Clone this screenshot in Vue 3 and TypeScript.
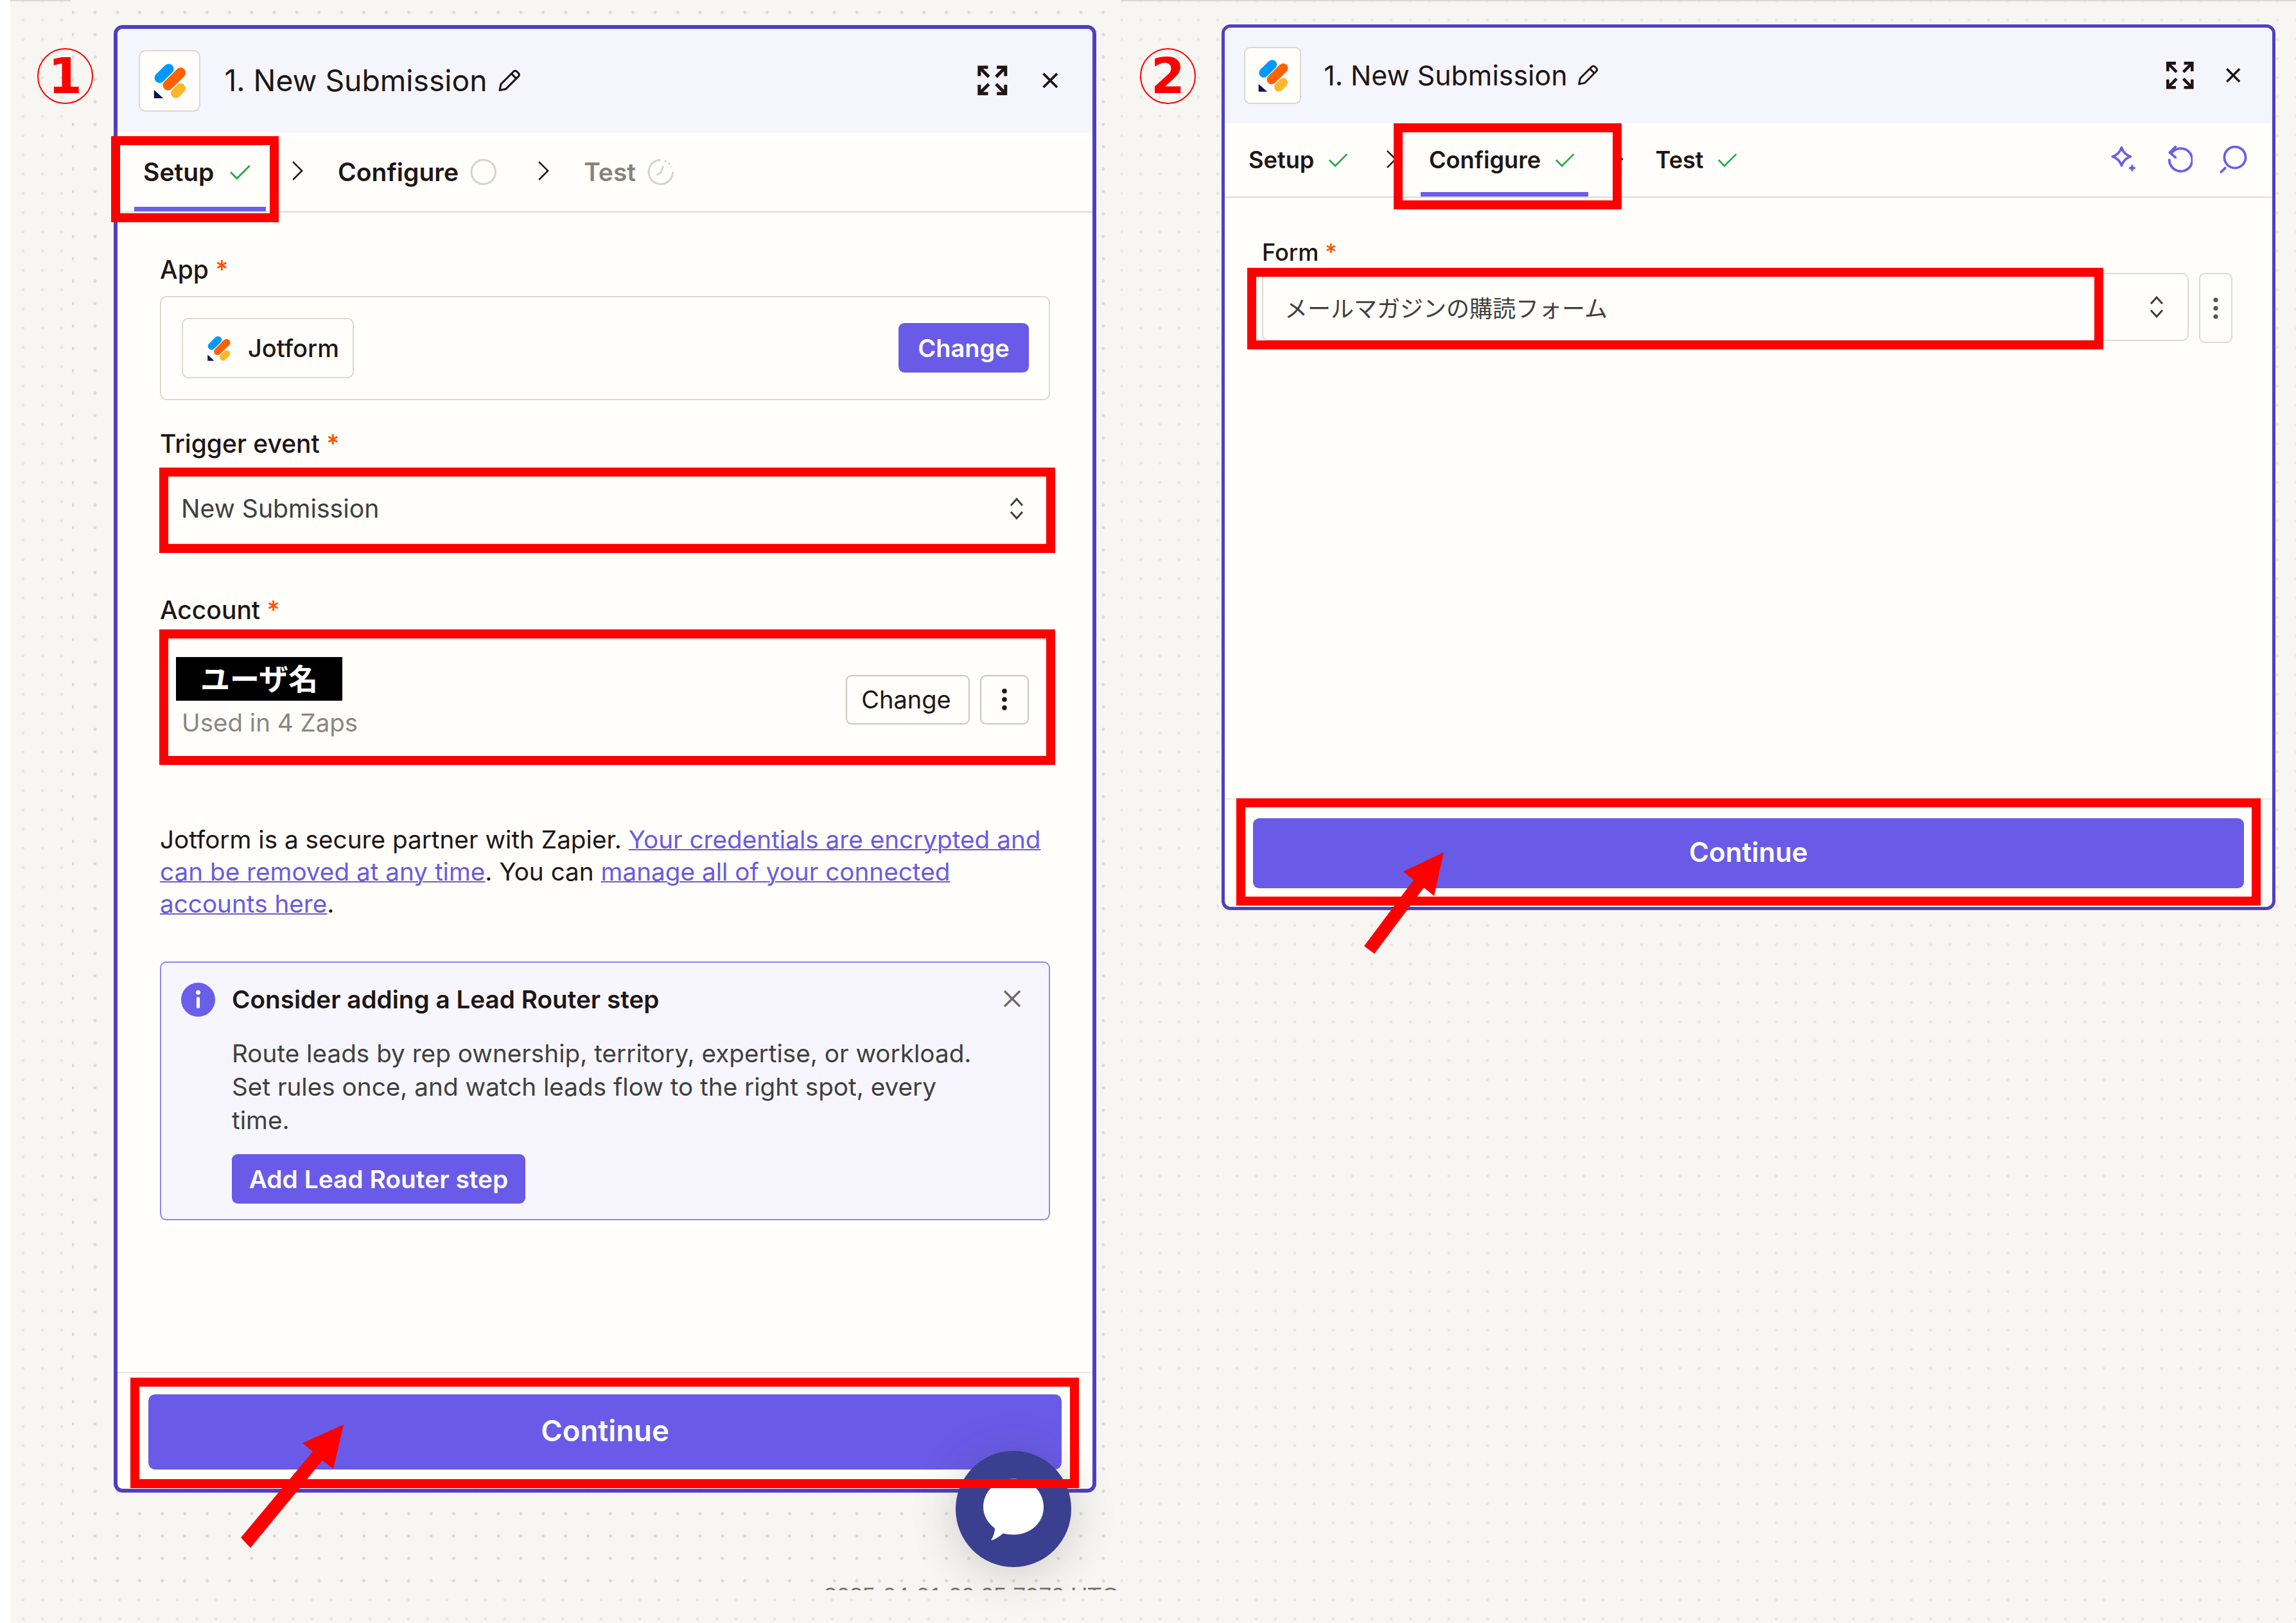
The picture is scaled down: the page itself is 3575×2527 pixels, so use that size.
<template>
  <div class="stage">
    <div class="canvas">
      <div class="grid-left"></div>
      <div class="strip strip-left"></div>
      <div class="strip strip-right"></div>
      <div class="cut-text">2025-04-01 00:05 7970 UTC</div>

      <div class="panels">
        <section v-for="panel in panels" :key="panel.id" class="panel" :class="`panel-${panel.id}`">
          <!-- Header -->
          <header class="panel-header">
            <div class="app-icon">
              <svg class="logo" viewBox="70 60 150 170">
                <path d="M100 133 141 93" stroke="#0099ff" stroke-width="46" stroke-linecap="round" />
                <path d="M138 166 195 110" stroke="#ff6100" stroke-width="46" stroke-linecap="round" />
                <path d="M173 202 195 180" stroke="#ffb629" stroke-width="44" stroke-linecap="round" />
                <path d="M75 187V225H117Z" fill="#0a1551" />
              </svg>
            </div>
            <h2 class="title">1. New Submission</h2>
            <svg class="pencil" viewBox="0 0 24 24" fill="none" stroke="#201515" stroke-width="1.8" stroke-linejoin="round">
              <path d="M3.5 20.5 4.6 15 16 3.6a2 2 0 0 1 2.8 0l1.6 1.6a2 2 0 0 1 0 2.8L9 19.4Z" />
              <path d="M14 5.6 18.4 10" />
            </svg>
            <button class="head-btn expand">
              <svg viewBox="0 0 24 24" fill="none" stroke="#201515" stroke-width="2.2">
                <path d="M3 9V3h6M3 3l6.5 6.5M15 3h6v6M21 3l-6.5 6.5M3 15v6h6M3 21l6.5-6.5M15 21h6v-6M21 21l-6.5-6.5" />
              </svg>
            </button>
            <button class="head-btn close">
              <svg viewBox="0 0 24 24" fill="none" stroke="#201515" stroke-width="3.2">
                <path d="M3 3 21 21M21 3 3 21" />
              </svg>
            </button>
          </header>

          <!-- Tabs -->
          <nav class="tabs">
            <template v-for="(tab, i) in panel.tabs" :key="tab.label">
              <svg v-if="i > 0" class="tab-sep" viewBox="0 0 18 30" fill="none" stroke="#201515" stroke-width="2.6">
                <path d="M2 1 16 15 2 29" />
              </svg>
              <div class="tab" :class="{ active: tab.active, muted: tab.state === 'pending' }">
                <span>{{ tab.label }}</span>
                <svg v-if="tab.state === 'done'" class="tab-check" viewBox="0 0 34 24" fill="none" stroke="#2fa84f" stroke-width="3">
                  <path d="M2 12 12 22 32 2" />
                </svg>
                <svg v-else-if="tab.state === 'todo'" class="tab-state" viewBox="0 0 42 42" fill="none" stroke="#d6d3c9" stroke-width="3">
                  <circle cx="21" cy="21" r="19" />
                </svg>
                <svg v-else class="tab-state" viewBox="0 0 42 42" fill="none" stroke="#d6d3c9" stroke-width="3">
                  <path d="M21 2a19 19 0 1 0 19 19" />
                  <path d="M27 3.5a19 19 0 0 1 11 10" stroke-dasharray="3 4" />
                  <path d="M25 12 21 22l-6 4" />
                </svg>
              </div>
            </template>
            <div v-if="panel.id === 2" class="tools">
              <svg class="tool" viewBox="0 0 36 36" fill="none" stroke="#6a5fe8" stroke-width="3" stroke-linejoin="round">
                <path d="M15 3c2 6 5 9 11 11-6 2-9 5-11 11-2-6-5-9-11-11 6-2 9-5 11-11Z" />
                <path d="M28 24c.7 2.400 1.600 3.300 4 4-2.400.7-3.300 1.600-4 4-.7-2.400-1.600-3.300-4-4 2.400-.7 3.300-1.600 4-4Z" fill="#6a5fe8" stroke-width="1" />
              </svg>
              <svg class="tool" viewBox="0 0 36 36" fill="none" stroke="#6a5fe8" stroke-width="3" stroke-linecap="round">
                <path d="M10 10a14 14 0 1 1-2.500 8" />
                <path d="M15 2 8 9l7 6" stroke-linejoin="round" />
              </svg>
              <svg class="tool" viewBox="0 0 36 36" fill="none" stroke="#6a5fe8" stroke-width="3" stroke-linecap="round">
                <circle cx="21" cy="15" r="13" />
                <path d="M4 33 9 28" />
              </svg>
            </div>
          </nav>

          <!-- Setup step -->
          <div v-if="panel.id === 1" class="body">
            <label class="field-label">App <i>*</i></label>
            <div class="app-box">
              <div class="chip">
                <svg class="chip-logo" viewBox="70 60 150 170">
                  <path d="M100 133 141 93" stroke="#0099ff" stroke-width="46" stroke-linecap="round" />
                  <path d="M138 166 195 110" stroke="#ff6100" stroke-width="46" stroke-linecap="round" />
                  <path d="M173 202 195 180" stroke="#ffb629" stroke-width="44" stroke-linecap="round" />
                  <path d="M75 187V225H117Z" fill="#0a1551" />
                </svg>
                Jotform
              </div>
              <button class="btn-change">Change</button>
            </div>

            <label class="field-label trigger-label">Trigger event <i>*</i></label>
            <div class="select trigger-select">
              <span>New Submission</span>
              <svg class="updown" viewBox="0 0 22 36" fill="none" stroke="#403f3e" stroke-width="3">
                <path d="M2 13 11 3l9 10M2 23l9 10 9-10" />
              </svg>
            </div>

            <label class="field-label account-label">Account <i>*</i></label>
            <div class="account">
              <div class="account-info">
                <div class="user-mask">ユーザ名</div>
                <div class="usage">Used in 4 Zaps</div>
              </div>
              <button class="btn-outline">Change</button>
              <button class="btn-outline kebab">
                <svg viewBox="0 0 8 36" fill="#201515">
                  <circle cx="4" cy="5" r="3.800" />
                  <circle cx="4" cy="18" r="3.800" />
                  <circle cx="4" cy="31" r="3.800" />
                </svg>
              </button>
            </div>

            <p class="partner">
              Jotform is a secure partner with Zapier.
              <a>Your credentials are encrypted and can be removed at any time</a>. You can
              <a>manage all of your connected accounts here</a>.
            </p>

            <div class="callout">
              <svg class="info" viewBox="0 0 52 52">
                <circle cx="26" cy="26" r="26" fill="#6a5fe8" />
                <circle cx="26" cy="15" r="3.500" fill="#fff" />
                <rect x="23.500" y="22" width="5" height="17" rx="1.500" fill="#fff" />
              </svg>
              <div class="callout-main">
                <h3>Consider adding a Lead Router step</h3>
                <p>Route leads by rep ownership, territory, expertise, or workload. Set rules once, and watch leads flow to the right spot, every time.</p>
                <button class="btn-add">Add Lead Router step</button>
              </div>
              <svg class="callout-close" viewBox="0 0 28 28" fill="none" stroke="#6b6963" stroke-width="3.200">
                <path d="M2 2 26 26M26 2 2 26" />
              </svg>
            </div>
          </div>

          <!-- Configure step -->
          <div v-else class="body">
            <label class="field-label">Form <i>*</i></label>
            <div class="form-row">
              <div class="select form-select">
                <span>メールマガジンの購読フォーム</span>
                <svg class="updown" viewBox="0 0 22 36" fill="none" stroke="#403f3e" stroke-width="3">
                  <path d="M2 13 11 3l9 10M2 23l9 10 9-10" />
                </svg>
              </div>
              <button class="btn-outline form-kebab">
                <svg viewBox="0 0 8 36" fill="#56544f">
                  <circle cx="4" cy="5" r="3.600" />
                  <circle cx="4" cy="18" r="3.600" />
                  <circle cx="4" cy="31" r="3.600" />
                </svg>
              </button>
            </div>
          </div>

          <footer class="panel-footer">
            <button class="btn-continue">Continue</button>
          </footer>
        </section>
      </div>

      <!-- Chat launcher -->
      <button class="chat">
        <svg viewBox="0 0 180 180" fill="#fff">
          <path d="M90 43C116 43 137 62 137 87 137 112 116 130 90 130 84 130 78 129 74 128 68 133 62 137 55 139 58 134 61 127 61 120 50 112 43 100 43 87 43 62 64 43 90 43Z" />
        </svg>
      </button>
    </div>

    <!-- Annotations drawn over the screenshot -->
    <div class="badge badge-1">1</div>
    <div class="badge badge-2">2</div>
    <div v-for="(box, i) in redBoxes" :key="i" class="red-box" :style="boxStyle(box)"></div>
    <svg class="arrows" viewBox="0 0 3575 2527">
      <polygon points="535,2218 519,2287 502,2274 390,2410 375,2394 487,2260 471,2247" fill="#ff0000" />
      <polygon points="2248,1327 2233,1395 2217,1382 2140,1485 2124,1473 2201,1370 2185,1357" fill="#ff0000" />
    </svg>
  </div>
</template>

<script setup lang="ts">
type TabState = 'done' | 'todo' | 'pending'

interface Tab {
  label: string
  state: TabState
  active?: boolean
}

const panels: { id: number; tabs: Tab[] }[] = [
  {
    id: 1,
    tabs: [
      { label: 'Setup', state: 'done', active: true },
      { label: 'Configure', state: 'todo' },
      { label: 'Test', state: 'pending' },
    ],
  },
  {
    id: 2,
    tabs: [
      { label: 'Setup', state: 'done' },
      { label: 'Configure', state: 'done', active: true },
      { label: 'Test', state: 'done' },
    ],
  },
]

// left, top, right, bottom of each red frame
const redBoxes = [
  [173, 212, 434, 346],
  [248, 728, 1643, 861],
  [248, 980, 1643, 1191],
  [203, 2145, 1680, 2317],
  [2170, 192, 2525, 326],
  [1942, 417, 3275, 544],
  [1925, 1243, 3520, 1410],
]

const boxStyle = (b: number[]) => ({
  left: `${b[0]}px`,
  top: `${b[1]}px`,
  width: `${b[2] - b[0]}px`,
  height: `${b[3] - b[1]}px`,
})
</script>

<style>
html,
body {
  margin: 0;
  background: #fff;
}
</style>

<style scoped>
.stage {
  position: relative;
  width: 3575px;
  height: 2527px;
  overflow: hidden;
  background: #fff;
  font-family: Inter, 'Noto Sans CJK JP', sans-serif;
  color: #201515;
}

.canvas {
  position: relative;
  margin-left: 16px;
  height: 2527px;
  background-color: #f7f6f3;
  background-image: radial-gradient(circle, #e9e7e2 2px, transparent 3px);
  background-size: 30px 30px;
  background-position: 5px -14px;
}

.grid-left {
  position: absolute;
  left: 96px;
  top: 0;
  width: 1633px;
  height: 2475px;
  background-color: #f7f6f3;
  background-image: radial-gradient(circle, #dbd9d2 2px, transparent 3px);
  background-size: 34.9px 34.9px;
  background-position: -16.45px 1.55px;
}

.strip {
  position: absolute;
  top: 0;
  height: 2px;
  background: #dcd9d2;
}

.strip-left {
  left: 0;
  width: 94px;
}

.strip-right {
  left: 1729px;
  right: 0;
}

.cut-text {
  position: absolute;
  left: 1267px;
  top: 2472px;
  height: 4px;
  overflow: hidden;
  font-family: 'Liberation Sans', sans-serif;
  font-size: 36px;
  line-height: 28px;
  white-space: nowrap;
  color: #77756f;
}

.panels {
  position: relative;
  display: flex;
  align-items: flex-start;
  gap: 195px;
  padding: 39px 0 0 161px;
}

.panel {
  display: flex;
  flex-direction: column;
  box-sizing: border-box;
  background: #fffefb;
  border-style: solid;
  border-color: #4f3fc0;
  overflow: hidden;
}

.panel-1 {
  --u: 2.6px;
  width: 1530px;
  height: 2285px;
  border-width: 6px;
  border-radius: 14px;
}

.panel-2 {
  --u: 2.41px;
  width: 1641px;
  height: 1379px;
  border-width: 5px;
  border-radius: 14px;
  margin-top: -1px;
}

.panel-header {
  display: flex;
  align-items: center;
  height: calc(var(--u) * 62);
  padding: 0 calc(var(--u) * 8) 0 calc(var(--u) * 12.5);
  background: #f5f5fd;
}

.app-icon {
  display: flex;
  align-items: center;
  justify-content: center;
  box-sizing: border-box;
  width: calc(var(--u) * 37);
  height: calc(var(--u) * 37);
  background: #fffefb;
  border: 2px solid #dcd9d0;
  border-radius: calc(var(--u) * 4);
}

.logo {
  width: calc(var(--u) * 20);
  height: calc(var(--u) * 22.6);
}

.title {
  margin: 0 calc(var(--u) * 5) 0 calc(var(--u) * 14.5);
  font-size: calc(var(--u) * 17.8);
  line-height: calc(var(--u) * 24);
  font-weight: 400;
}

.pencil {
  width: calc(var(--u) * 16);
  height: calc(var(--u) * 16);
}

.head-btn {
  display: flex;
  align-items: center;
  justify-content: center;
  width: calc(var(--u) * 34.5);
  height: calc(var(--u) * 34.5);
  padding: 0;
  background: none;
  border: 0;
}

.expand {
  margin-left: auto;
}

.expand svg {
  width: calc(var(--u) * 21);
  height: calc(var(--u) * 21);
}

.close svg {
  width: calc(var(--u) * 11);
  height: calc(var(--u) * 11);
}

.tabs {
  display: flex;
  align-items: center;
  box-sizing: border-box;
  height: calc(var(--u) * 48);
  padding: 0 calc(var(--u) * 8.3) 0 calc(var(--u) * 10);
  border-bottom: 2px solid #dedbd3;
}

.tab {
  display: flex;
  align-items: center;
  align-self: stretch;
  box-sizing: border-box;
  padding: 7px calc(var(--u) * 8.8) 0 calc(var(--u) * 5.4);
  border-bottom: 7px solid transparent;
  font-size: calc(var(--u) * 15);
  font-weight: 600;
  white-space: nowrap;
}

.tab.active {
  border-bottom-color: #6a5fe8;
}

.tab.muted {
  color: #86837c;
}

.tab-sep {
  flex: none;
  width: calc(var(--u) * 7);
  height: calc(var(--u) * 11.500);
  margin: 0 calc(var(--u) * 15.4) calc(var(--u) * 1) calc(var(--u) * 15.5);
}

.tab-check {
  width: calc(var(--u) * 13);
  height: calc(var(--u) * 9.2);
  margin-left: calc(var(--u) * 9);
}

.tab-state {
  width: calc(var(--u) * 16);
  height: calc(var(--u) * 16);
  margin-left: calc(var(--u) * 7);
}

.tools {
  display: flex;
  margin-left: auto;
}

.tool {
  width: calc(var(--u) * 19);
  height: calc(var(--u) * 19);
  padding: 0 calc(var(--u) * 8);
}

.body {
  flex: 1;
  box-sizing: border-box;
  padding: 63px 66px 0;
}

.panel-2 .body {
  padding: 61px 62px 0 58px;
}

.field-label {
  display: block;
  font-size: calc(var(--u) * 15);
  line-height: calc(var(--u) * 20);
  font-weight: 500;
}

.field-label i {
  color: #ff4f00;
  font-style: normal;
}

.app-box {
  display: flex;
  align-items: center;
  justify-content: space-between;
  box-sizing: border-box;
  height: 162px;
  margin-top: 15px;
  padding: 0 31px 0 32px;
  border: 2px solid #dcd9d0;
  border-radius: 10px;
}

.chip {
  display: flex;
  align-items: center;
  gap: 27px;
  box-sizing: border-box;
  width: 268px;
  height: 94px;
  padding-left: 37px;
  border: 2px solid #dcd9d0;
  border-radius: 10px;
  font-size: 38px;
  font-weight: 500;
}

.chip-logo {
  width: 37px;
  height: 42px;
}

.btn-change {
  width: 203px;
  height: 77px;
  padding: 0;
  background: #695be8;
  border: 0;
  border-radius: 9px;
  color: #fff;
  font: 600 38px Inter, sans-serif;
}

.trigger-label {
  margin-top: 42px;
}

.select {
  display: flex;
  align-items: center;
  justify-content: space-between;
  box-sizing: border-box;
  border: 2px solid #dcd9d0;
  border-radius: 10px;
  color: #403f3e;
}

.trigger-select {
  height: 112px;
  margin-top: 19px;
  padding: 0 39px 0 31px;
  font-size: 39.200px;
}

.updown {
  width: 22px;
  height: 36px;
}

.account-label {
  margin-top: 76px;
}

.account {
  display: flex;
  align-items: center;
  gap: 16px;
  box-sizing: border-box;
  height: 186px;
  margin-top: 18px;
  padding: 0 31px 0 32px;
  border: 2px solid #dcd9d0;
  border-radius: 10px;
}

.account-info {
  flex: 1;
  padding-top: 1px;
}

.user-mask {
  width: 259px;
  height: 68px;
  margin-left: -9px;
  background: #000;
  color: #fff;
  font-size: 46px;
  font-weight: 700;
  line-height: 68px;
  text-align: center;
}

.usage {
  margin-top: 8px;
  color: #8a8780;
  font-size: 38.500px;
  line-height: 52px;
}

.btn-outline {
  display: flex;
  align-items: center;
  justify-content: center;
  box-sizing: border-box;
  width: 193px;
  height: 77px;
  margin-top: 5px;
  padding: 0 5px 0 0;
  background: none;
  border: 2px solid #c9c6bd;
  border-radius: 9px;
  color: #201515;
  font: 400 38px Inter, sans-serif;
}

.btn-outline.kebab {
  width: 76px;
  padding: 0;
}

.kebab svg {
  width: 8px;
  height: 36px;
}

.partner {
  margin: 102px 0 0;
  font-size: 38.700px;
  line-height: 50px;
  color: #201515;
}

.partner a {
  color: #6a5be0;
  text-decoration: underline;
  text-decoration-thickness: 2px;
}

.callout {
  display: flex;
  align-items: flex-start;
  box-sizing: border-box;
  height: 403px;
  margin-top: 65px;
  padding: 31px 43px 0 31px;
  background: #f7f6fe;
  border: 2px solid #8f88f0;
  border-radius: 10px;
}

.info {
  flex: none;
  width: 53px;
  height: 53px;
  margin-right: 26px;
}

.callout-main {
  flex: 1;
}

.callout h3 {
  margin: 0;
  font-size: 38.700px;
  line-height: 52px;
  font-weight: 600;
}

.callout p {
  width: 1170px;
  margin: 32px 0 0;
  font-size: 38.700px;
  line-height: 52px;
  color: #403f3e;
}

.btn-add {
  display: block;
  width: 457px;
  height: 77px;
  margin-top: 27px;
  padding: 0;
  background: #695be8;
  border: 0;
  border-radius: 9px;
  color: #fff;
  font: 600 38.900px Inter, sans-serif;
}

.callout-close {
  flex: none;
  width: 28px;
  height: 28px;
  margin-top: 11px;
}

.form-row {
  display: flex;
  gap: 16px;
  margin-top: 8px;
}

.form-select {
  flex: 1;
  height: 106px;
  padding: 0 37px 0 33px;
  font-size: 36px;
}

.form-kebab {
  width: 52px;
  height: 109px;
  margin-top: 0;
  padding: 0;
  border-color: #dcd9d0;
}

.form-kebab svg {
  width: 8px;
  height: 36px;
}

.panel-footer {
  box-sizing: border-box;
  height: calc(var(--u) * 70);
  padding: calc(var(--u) * 12.500) calc(var(--u) * 18.300) 0;
  border-top: 2px solid #eceae4;
}

.panel-2 .panel-footer {
  padding-top: calc(var(--u) * 12);
}

.btn-continue {
  display: block;
  width: 100%;
  height: calc(var(--u) * 45);
  padding: 0 0 3px;
  background: #695be8;
  border: 0;
  border-radius: calc(var(--u) * 4);
  color: #fff;
  font: 600 calc(var(--u) * 17.500) Inter, sans-serif;
}

.chat {
  position: absolute;
  left: 1472px;
  top: 2259px;
  width: 180px;
  height: 181px;
  padding: 0;
  background: #3b3f8f;
  border: 0;
  border-radius: 50%;
  box-shadow: 0 8px 70px rgba(60, 55, 40, 0.22);
}

.chat svg {
  display: block;
  width: 180px;
  height: 181px;
}

.badge {
  position: absolute;
  top: 75px;
  display: flex;
  align-items: center;
  justify-content: center;
  box-sizing: border-box;
  width: 87px;
  height: 87px;
  border: 2.5px solid #ff0000;
  border-radius: 50%;
  color: #ff0000;
  font: 700 76px 'DejaVu Sans', sans-serif;
}

.badge-1 {
  left: 58px;
}

.badge-2 {
  left: 1775px;
}

.red-box {
  position: absolute;
  box-sizing: border-box;
  border: 14px solid #ff0000;
}

.arrows {
  position: absolute;
  left: 0;
  top: 0;
  width: 3575px;
  height: 2527px;
  pointer-events: none;
}
</style>
